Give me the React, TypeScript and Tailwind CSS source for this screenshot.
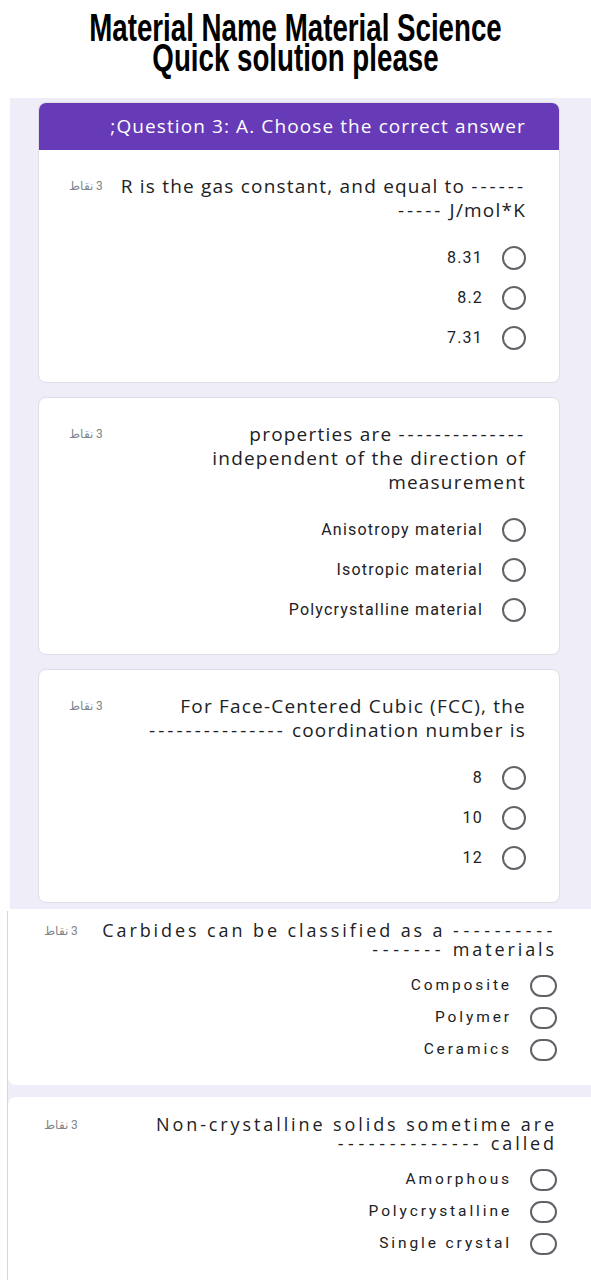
import React from "react";

const sans = "font-['Open_Sans','Noto_Sans',sans-serif]";
const rob = "font-['Roboto','Noto_Sans',sans-serif]";

function Line({ text, dash }: { text: string; dash: string }) {
  const parts = text.split(/(-{2,})/);
  return (
    <div className="whitespace-pre">
      {parts.map((p, i) =>
        /^-{2,}$/.test(p) ? (
          <span key={i} className={dash}>{p}</span>
        ) : (
          <span key={i}>{p}</span>
        )
      )}
    </div>
  );
}

function Points({ small }: { small?: boolean }) {
  return (
    <span
      dir="rtl"
      className={`${rob} shrink-0 text-[#80868b] ${small ? "text-[12px] tracking-[2px] leading-[20px]" : "text-[12px] tracking-[1px] leading-[24px]"}`}
    >
      3 نقاط
    </span>
  );
}

function UpperBody({ lines, options }: { lines: string[]; options: string[] }) {
  return (
    <div className="pt-[24px] pb-[32px] pl-[30px] pr-[33px]">
      <div className="flex items-start justify-between">
        <Points />
        <div className={`${sans} text-right text-[19px] leading-[24px] tracking-[1.2px] text-[#202124]`}>
          {lines.map((l, i) => (
            <Line key={i} text={l} dash="tracking-[3px]" />
          ))}
        </div>
      </div>
      <div className="mt-[24px] flex flex-col gap-[16px]">
        {options.map((o) => (
          <div key={o} className="flex h-[24px] items-center justify-end gap-[19px]">
            <span className={`${rob} text-[16px] tracking-[1.2px] text-[#202124]`}>{o}</span>
            <span className="h-[24px] w-[24px] rounded-full border-2 border-[#5f6368]" />
          </div>
        ))}
      </div>
    </div>
  );
}

function LowerBody({ lines, options, pt }: { lines: string[]; options: string[]; pt: string }) {
  return (
    <div className={`${pt} pl-[36px] pr-[34px]`}>
      <div className="flex items-start justify-between">
        <Points small />
        <div className={`${sans} text-right text-[18px] leading-[19px] tracking-[2.9px] text-[#202124]`}>
          {lines.map((l, i) => (
            <Line key={i} text={l} dash="tracking-[4.6px]" />
          ))}
        </div>
      </div>
      <div className="mt-[16px] flex flex-col gap-[10px]">
        {options.map((o) => (
          <div key={o} className="flex h-[22px] items-center justify-end gap-[18px]">
            <span className={`${rob} text-[15.5px] tracking-[2.9px] text-[#202124]`}>{o}</span>
            <span className="h-[22px] w-[27px] rounded-full border-2 border-[#5f6368]" />
          </div>
        ))}
      </div>
    </div>
  );
}

export default function App() {
  return (
    <div className="min-h-[1280px] w-[591px] overflow-hidden bg-white">
      {/* Title */}
      <div className="flex flex-col items-center pt-[13px] pb-[25px]">
        <div className="font-['Liberation_Sans','Arial',sans-serif] text-[39px] font-bold leading-[30px] text-black text-center whitespace-nowrap scale-x-[0.71]">
          <div>Material Name Material Science</div>
          <div>Quick solution please</div>
        </div>
      </div>

      {/* first screenshot */}
      <div className="ml-[10px] bg-[#efedf8] pt-[4px] pb-[6px] pl-[28px] pr-[31px] flex flex-col gap-[14px]">
        <div className="rounded-lg bg-white border border-[#e0dde8] overflow-hidden">
          <div className="flex h-[47px] items-center justify-end bg-[#673ab7] pr-[33px]">
            <span className={`${sans} text-[19px] tracking-[1.1px] text-white`}>;Question 3: A. Choose the correct answer</span>
          </div>
          <UpperBody
            lines={["R is the gas constant, and equal to ------", "----- J/mol*K"]}
            options={["8.31", "8.2", "7.31"]}
          />
        </div>
        <div className="rounded-lg bg-white border border-[#e0dde8]">
          <UpperBody
            lines={["properties are --------------", "independent of the direction of", "measurement"]}
            options={["Anisotropy material", "Isotropic material", "Polycrystalline material"]}
          />
        </div>
        <div className="rounded-lg bg-white border border-[#e0dde8]">
          <UpperBody
            lines={["For Face-Centered Cubic (FCC), the", "--------------- coordination number is"]}
            options={["8", "10", "12"]}
          />
        </div>
      </div>

      {/* second screenshot */}
      <div className="mt-[2px] ml-[7px] border-l border-[#d6d6d6] bg-[#efedf8] flex flex-col gap-[12px]">
        <div className="rounded-bl-lg bg-white pb-[24px]">
          <LowerBody
            pt="pt-[10px]"
            lines={["Carbides can be classified as a ----------", "------- materials"]}
            options={["Composite", "Polymer", "Ceramics"]}
          />
        </div>
        <div className="rounded-tl-lg bg-white pb-[40px]">
          <LowerBody
            pt="pt-[18px]"
            lines={["Non-crystalline solids sometime are", "-------------- called"]}
            options={["Amorphous", "Polycrystalline", "Single crystal"]}
          />
        </div>
      </div>
    </div>
  );
}
